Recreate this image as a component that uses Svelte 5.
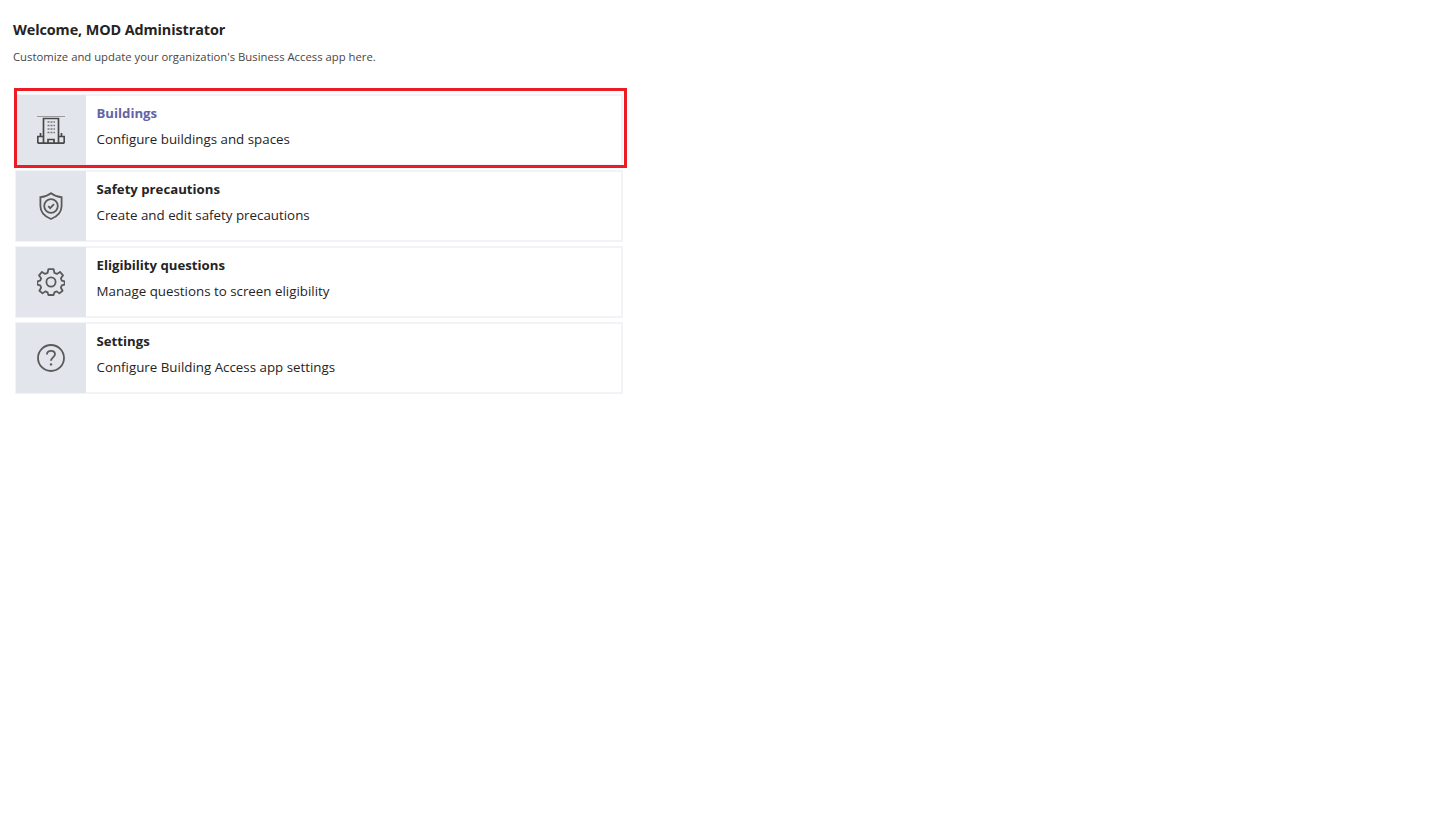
<script>
  const cards = [
    { id: 'buildings', title: 'Buildings', desc: 'Configure buildings and spaces', active: true },
    { id: 'safety', title: 'Safety precautions', desc: 'Create and edit safety precautions' },
    { id: 'eligibility', title: 'Eligibility questions', desc: 'Manage questions to screen eligibility' },
    { id: 'settings', title: 'Settings', desc: 'Configure Building Access app settings' }
  ];
</script>

<div class="page">
  <h1 class="welcome">Welcome, MOD Administrator</h1>
  <p class="intro">Customize and update your organization's Business Access app here.</p>

  <div class="card-list">
    <div class="highlight"></div>
    {#each cards as card}
      <div class="card">
        <div class="card-icon">
          {#if card.id === 'buildings'}
            <svg width="28" height="28" viewBox="0 0 28 28" fill="none" stroke="#484848">
              <path d="M0 0.5H28" stroke="#9a9a9a" />
              <path d="M6.5 27V2.5H21.5V27" stroke-width="1.7" />
              <path d="M3.5 20V17M24.5 20V17" stroke-width="1.7" />
              <path d="M0.8 27.2V20.5H6.5M21.5 20.5H27.2V27.2M0.8 27.2H27.2" stroke-width="1.7" />
              <path d="M11 27V23.5H17V27" stroke-width="1.7" />
              <path d="M10.5 6H12.5M13.5 6H15.5M16.5 6H18M10.5 9.5H12.5M13.5 9.5H15.5M16.5 9.5H18M10.5 13H12.5M13.5 13H15.5M16.5 13H18M10.5 16.5H12.5M13.5 16.5H15.5M16.5 16.5H18" stroke-width="1.7" stroke="#777" />
            </svg>
          {:else if card.id === 'safety'}
            <svg width="28" height="28" viewBox="0 0 28 28" fill="none" stroke="#5a5a5a" stroke-width="1.8">
              <path d="M14 1.2C11 3.6 8 4.8 3.4 5.2V14C3.4 20 7.4 24.4 14 27C20.6 24.4 24.6 20 24.6 14V5.2C20 4.8 17 3.6 14 1.2Z" />
              <circle cx="14" cy="14" r="6.8" />
              <path d="M11.2 14.2L13.2 16.2L17 12.2" />
            </svg>
          {:else if card.id === 'eligibility'}
            <svg width="28" height="28" viewBox="0 0 28 28" fill="none" stroke="#5a5a5a" stroke-width="1.8" stroke-linejoin="round">
              <circle cx="14" cy="14" r="4.6" />
              <path d="M11.4 1.2H16.6L17.4 4.9L19.9 5.9L23 3.9L26 7.4L23.9 10.3L24.8 12.6L27.6 13.4V16.6L24.8 17.4L23.9 19.7L25.6 22.8L22.4 25.4L19.7 23.4L17.4 24.4L16.6 27H11.4L10.6 24.4L8.3 23.4L5.6 25.4L2.4 22.8L4.1 19.7L3.2 17.4L0.4 16.6V13.4L3.2 12.6L4.1 10.3L2 7.4L5 3.9L8.1 5.9L10.6 4.9Z" />
            </svg>
          {:else}
            <svg width="28" height="28" viewBox="0 0 28 28" fill="none" stroke="#5a5a5a" stroke-width="1.8">
              <circle cx="14" cy="14" r="13" />
              <path d="M10 10.6C10 8.2 11.8 6.9 14 6.9C16.2 6.9 18 8.2 18 10.3C18 13.2 14 13.6 14 16.8" />
              <circle cx="14" cy="20.4" r="1.2" fill="#5a5a5a" stroke="none" />
            </svg>
          {/if}
        </div>
        <div class="card-text">
          <div class="card-title" class:active={card.active}>{card.title}</div>
          <div class="card-desc">{card.desc}</div>
        </div>
      </div>
    {/each}
  </div>
</div>

<style>
  :global(body) {
    background: #fff;
    font-family: "Open Sans", "Noto Sans", sans-serif;
  }

  .page {
    padding: 20px 13px;
    height: 782px;
  }

  .welcome {
    margin: 0;
    font-size: 14.4px;
    line-height: 20px;
    font-weight: 700;
    letter-spacing: -0.1px;
    color: #252423;
  }

  .intro {
    margin: 7px 0 0;
    font-size: 11.3px;
    line-height: 20px;
    color: #484644;
  }

  .card-list {
    position: relative;
    display: flex;
    flex-direction: column;
    gap: 4px;
    width: 608px;
    margin: 27px 0 0 2px;
  }

  .highlight {
    position: absolute;
    left: -1px;
    top: -6px;
    width: 613px;
    height: 80px;
    box-sizing: border-box;
    border: 3px solid #ed1c24;
  }

  .card {
    display: flex;
    height: 72px;
    box-sizing: border-box;
    border: 2px solid #f3f2f6;
  }

  .card-icon {
    display: flex;
    align-items: center;
    justify-content: center;
    width: 70px;
    margin: -1px 0 -1px -1px;
    background: #e2e5ec;
  }

  .card-text {
    padding: 7px 0 0 10.5px;
  }

  .card-title {
    font-size: 13.2px;
    line-height: 20px;
    font-weight: 700;
    color: #252423;
  }

  .card-title.active {
    color: #6264a7;
  }

  .card-desc {
    margin-top: 6px;
    font-size: 13.33px;
    line-height: 20px;
    color: #252423;
  }
</style>
